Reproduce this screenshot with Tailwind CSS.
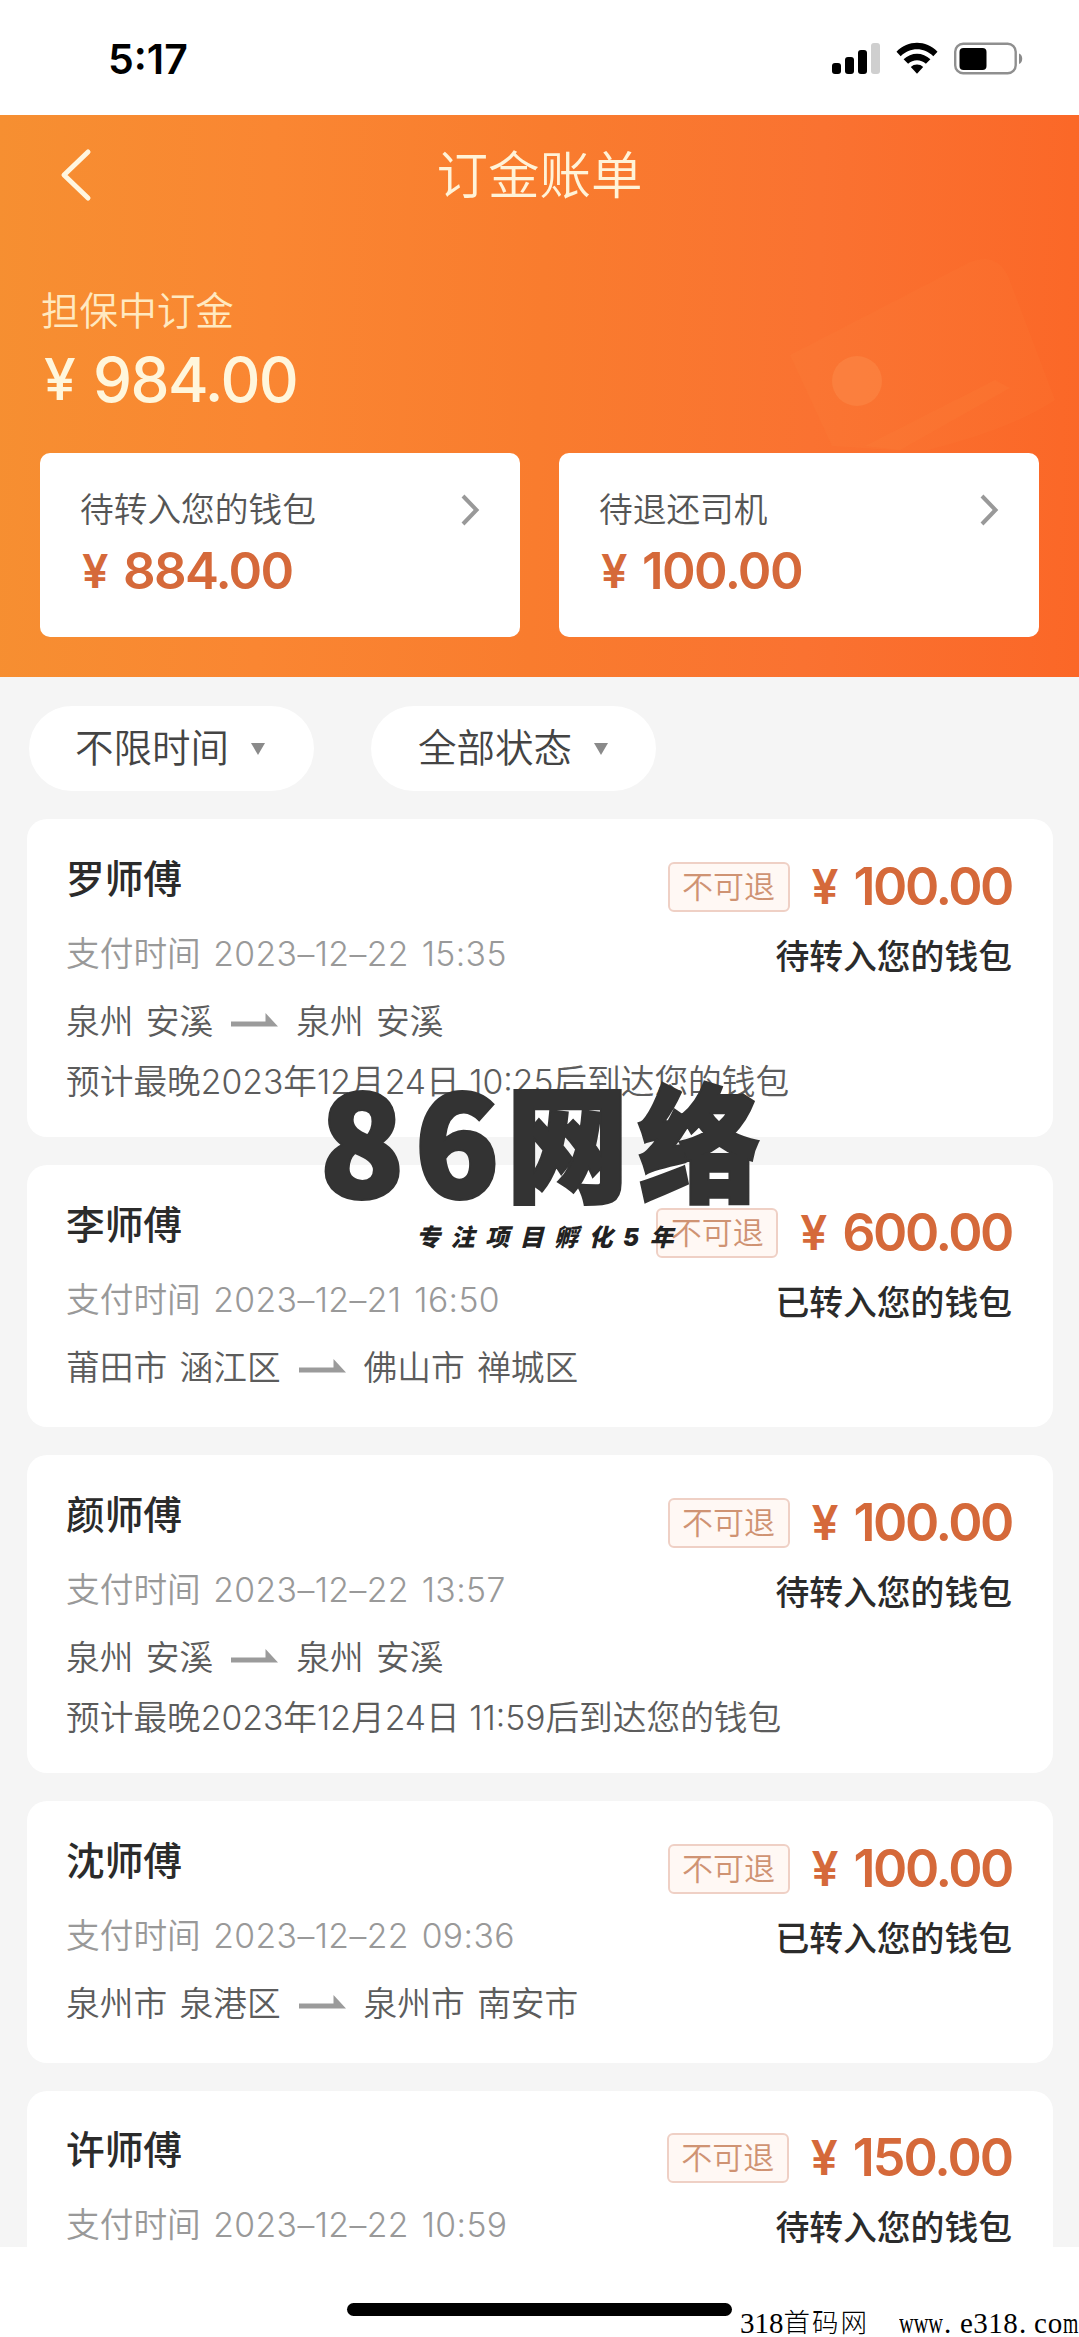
<!DOCTYPE html>
<html lang="zh-CN">
<head>
<meta charset="utf-8">
<title>订金账单</title>
<script src="https://cdn.jsdelivr.net/npm/@tailwindcss/browser@4"></script>
</head>
<body class="relative flex h-[2337px] w-[1079px] flex-col overflow-hidden bg-white font-['Inter','Noto_Sans_CJK_SC',sans-serif] whitespace-nowrap">

<svg class="hidden">
  <symbol id="arrow" viewBox="0 0 47 14"><path d="M0 8.5H34.5V0L47 13.5H0Z" fill="#9b9b9b"/></symbol>
  <symbol id="chevron" viewBox="0 0 20 34"><path d="M3 3L16.500 17L3 31" fill="none" stroke="#999" stroke-width="4"/></symbol>
</svg>

<!-- Status bar -->
<div class="flex h-[115px] shrink-0 items-start justify-between pr-[56px] pl-[108px]">
  <span class="mt-[39px] text-[41px] leading-10 font-semibold text-black">5:17</span>
  <div class="mt-[42px] flex items-start">
    <svg class="h-[33px] w-[50px]" viewBox="0 0 50 33">
      <rect x="0" y="21" width="9" height="11" rx="3"/>
      <rect x="13" y="15" width="9" height="17" rx="3"/>
      <rect x="26" y="8" width="9" height="24" rx="3"/>
      <rect x="39" y="1" width="9" height="31" rx="3" fill="#cfcfcf"/>
    </svg>
    <svg class="ml-[14px] h-[33px] w-[42px]" viewBox="0 0 42 33">
      <path d="M0.500 9.700C12-2.200 30-2.200 41.500 9.700L37.300 14.200C28 5 14 5 4.700 14.200Z"/>
      <path d="M7.600 17.300C15 9.800 27 9.800 34.400 17.300L29.900 21.800C25 17 17 17 12.100 21.800Z"/>
      <path d="M14.800 25C18 21.700 24 21.700 27.200 25L21 31.700Z"/>
    </svg>
    <svg class="ml-[16px] h-[33px] w-[69px]" viewBox="0 0 69 33">
      <rect x="1.200" y="1.700" width="60.500" height="29.500" rx="8" fill="none" stroke="#8f8f8f" stroke-width="2.400"/>
      <rect x="5.500" y="6" width="27" height="22" rx="4"/>
      <path d="M65 11.500C69.300 13 69.300 20.500 65 22Z" fill="#8a8a8a"/>
    </svg>
  </div>
</div>

<!-- Orange header -->
<header class="relative flex h-[562px] shrink-0 flex-col bg-linear-[92deg,#f68f31_0%,#fa8632_25%,#f97c2e_50%,#fa7231_75%,#fb6727_100%] px-10">
  <svg class="absolute top-[125px] left-[770px] h-[210px] w-[300px]" viewBox="0 0 300 210">
    <path d="M20 115L200 22Q226 12 238 36L285 160Q240 190 150 212L62 206Z" fill="#ffb36b" fill-opacity=".05"/>
    <path d="M95 206L225 140L240 148L130 210Z" fill="#ffa050" fill-opacity=".09"/>
    <circle cx="87" cy="141" r="25" fill="#ffb070" fill-opacity=".2"/>
  </svg>
  <div class="relative mt-[33px] flex h-[54px] items-center justify-center">
    <svg class="absolute top-0 left-[18px] h-[54px] w-[34px]" viewBox="0 0 34 54"><path d="M30 4L6 27L30 50" fill="none" stroke="#fff6e0" stroke-width="5" stroke-linecap="round" stroke-linejoin="round"/></svg>
    <h1 class="text-[51.500px] leading-[54px] font-[350] text-[#fff3d8]">订金账单</h1>
  </div>
  <p class="mt-[89px] pl-[1px] text-[38.600px] leading-10 font-[350] text-[#ffe9c0]">担保中订金</p>
  <div class="mt-[18px] flex items-center pl-[4px] leading-[62px] font-medium text-[#fff6dc]">
    <span class="w-[49px] text-[57px]">¥</span><span class="text-[62px] tracking-[-1.600px]">984.00</span>
  </div>
  <div class="mt-[42px] grid h-[184px] grid-cols-2 gap-[39px]">
    <section class="rounded-[10px] bg-white px-10 pt-[37px]">
      <div class="flex h-10 items-center justify-between"><span class="text-[33.700px] font-[350] text-[#555]">待转入您的钱包</span><svg class="h-[34px] w-5"><use href="#chevron"/></svg></div>
      <div class="mt-[15px] flex h-[52px] items-center pl-[2px] font-semibold text-[#d5693a]"><span class="w-[41px] text-[47px]">¥</span><span class="text-[51px] tracking-[-1.700px]">884.00</span></div>
    </section>
    <section class="rounded-[10px] bg-white px-10 pt-[37px]">
      <div class="flex h-10 items-center justify-between"><span class="text-[33.700px] font-[350] text-[#555]">待退还司机</span><svg class="h-[34px] w-5"><use href="#chevron"/></svg></div>
      <div class="mt-[15px] flex h-[52px] items-center pl-[2px] font-semibold text-[#d5693a]"><span class="w-[41px] text-[47px]">¥</span><span class="text-[51px] tracking-[-1.600px]">100.00</span></div>
    </section>
  </div>
</header>

<main class="flex h-[1570px] shrink-0 flex-col overflow-hidden bg-[#f5f5f5] pr-[26px] pl-[27px]">
  <!-- Filters -->
  <nav class="mt-[29px] flex h-[85px] shrink-0 gap-[57px] pl-[2px] text-[38.500px] text-[#444]">
    <button class="flex w-[285px] items-center rounded-full bg-white pl-[46px] font-[350]">不限时间<svg class="ml-[22px] h-3 w-[14px]" viewBox="0 0 14 12"><path d="M0 0H14L7 12Z" fill="#8a8a8a"/></svg></button>
    <button class="flex w-[285px] items-center rounded-full bg-white pl-[47px] font-[350]">全部状态<svg class="ml-[22px] h-3 w-[14px]" viewBox="0 0 14 12"><path d="M0 0H14L7 12Z" fill="#8a8a8a"/></svg></button>
  </nav>

  <!-- Bills -->
  <div class="mt-7 flex flex-col gap-7">
    <article class="flex h-[318px] justify-between rounded-[20px] bg-white pr-[41px] pl-[39px]">
      <div class="pt-[40px] text-[33.700px] leading-10 font-[350] text-[#5c5c5c]">
        <h2 class="text-[38.700px] leading-10 font-medium text-[#2b2b2b]">罗师傅</h2>
        <p class="mt-[35px] text-[#999] [word-spacing:3px]">支付时间 <span class="tracking-[0.400px]">2023–12–22 15:35</span></p>
        <p class="mt-7 flex items-center [word-spacing:3px]">泉州 安溪<svg class="mx-[18px] mb-1 h-[14px] w-[47px]"><use href="#arrow"/></svg>泉州 安溪</p>
        <p class="mt-5 w-0">预计最晚2023年12月24日 10:25后到达您的钱包</p>
      </div>
      <div class="flex flex-col items-end pt-[43px]">
        <div class="flex h-[50px] items-center text-[#d5693a]"><span class="flex h-[50px] w-[122px] items-center justify-center rounded-md border-2 border-[#efd0c5] bg-[#fff8f4] text-[31px] font-[350] text-[#cf9373]">不可退</span><span class="ml-[22px] w-[42px] text-[48px] font-semibold">¥</span><span class="text-[52px] font-semibold tracking-[-2.400px]">100.00</span></div>
        <p class="mt-[25px] text-[33.800px] leading-10 font-medium text-[#2b2b2b]">待转入您的钱包</p>
      </div>
    </article>

    <article class="flex h-[262px] justify-between rounded-[20px] bg-white pr-[41px] pl-[39px]">
      <div class="pt-[40px] text-[33.700px] leading-10 font-[350] text-[#5c5c5c]">
        <h2 class="text-[38.700px] leading-10 font-medium text-[#2b2b2b]">李师傅</h2>
        <p class="mt-[35px] text-[#999] [word-spacing:3px]">支付时间 <span class="tracking-[0.400px]">2023–12–21 16:50</span></p>
        <p class="mt-7 flex items-center [word-spacing:3px]">莆田市 涵江区<svg class="mx-[18px] mb-1 h-[14px] w-[47px]"><use href="#arrow"/></svg>佛山市 禅城区</p>
      </div>
      <div class="flex flex-col items-end pt-[43px]">
        <div class="flex h-[50px] items-center text-[#d5693a]"><span class="flex h-[50px] w-[122px] items-center justify-center rounded-md border-2 border-[#efd0c5] bg-[#fff8f4] text-[31px] font-[350] text-[#cf9373]">不可退</span><span class="ml-[22px] w-[42px] text-[48px] font-semibold">¥</span><span class="text-[52px] font-semibold tracking-[-2.400px]">600.00</span></div>
        <p class="mt-[25px] text-[33.800px] leading-10 font-medium text-[#2b2b2b]">已转入您的钱包</p>
      </div>
    </article>

    <article class="flex h-[318px] justify-between rounded-[20px] bg-white pr-[41px] pl-[39px]">
      <div class="pt-[40px] text-[33.700px] leading-10 font-[350] text-[#5c5c5c]">
        <h2 class="text-[38.700px] leading-10 font-medium text-[#2b2b2b]">颜师傅</h2>
        <p class="mt-[35px] text-[#999] [word-spacing:3px]">支付时间 <span class="tracking-[0.400px]">2023–12–22 13:57</span></p>
        <p class="mt-7 flex items-center [word-spacing:3px]">泉州 安溪<svg class="mx-[18px] mb-1 h-[14px] w-[47px]"><use href="#arrow"/></svg>泉州 安溪</p>
        <p class="mt-5 w-0">预计最晚2023年12月24日 11:59后到达您的钱包</p>
      </div>
      <div class="flex flex-col items-end pt-[43px]">
        <div class="flex h-[50px] items-center text-[#d5693a]"><span class="flex h-[50px] w-[122px] items-center justify-center rounded-md border-2 border-[#efd0c5] bg-[#fff8f4] text-[31px] font-[350] text-[#cf9373]">不可退</span><span class="ml-[22px] w-[42px] text-[48px] font-semibold">¥</span><span class="text-[52px] font-semibold tracking-[-2.400px]">100.00</span></div>
        <p class="mt-[25px] text-[33.800px] leading-10 font-medium text-[#2b2b2b]">待转入您的钱包</p>
      </div>
    </article>

    <article class="flex h-[262px] justify-between rounded-[20px] bg-white pr-[41px] pl-[39px]">
      <div class="pt-[40px] text-[33.700px] leading-10 font-[350] text-[#5c5c5c]">
        <h2 class="text-[38.700px] leading-10 font-medium text-[#2b2b2b]">沈师傅</h2>
        <p class="mt-[35px] text-[#999] [word-spacing:3px]">支付时间 <span class="tracking-[0.400px]">2023–12–22 09:36</span></p>
        <p class="mt-7 flex items-center [word-spacing:3px]">泉州市 泉港区<svg class="mx-[18px] mb-1 h-[14px] w-[47px]"><use href="#arrow"/></svg>泉州市 南安市</p>
      </div>
      <div class="flex flex-col items-end pt-[43px]">
        <div class="flex h-[50px] items-center text-[#d5693a]"><span class="flex h-[50px] w-[122px] items-center justify-center rounded-md border-2 border-[#efd0c5] bg-[#fff8f4] text-[31px] font-[350] text-[#cf9373]">不可退</span><span class="ml-[22px] w-[42px] text-[48px] font-semibold">¥</span><span class="text-[52px] font-semibold tracking-[-2.400px]">100.00</span></div>
        <p class="mt-[25px] text-[33.800px] leading-10 font-medium text-[#2b2b2b]">已转入您的钱包</p>
      </div>
    </article>

    <article class="flex h-[262px] justify-between rounded-[20px] bg-white pr-[41px] pl-[39px]">
      <div class="pt-[39px] text-[33.700px] leading-10 font-[350] text-[#5c5c5c]">
        <h2 class="text-[38.700px] leading-10 font-medium text-[#2b2b2b]">许师傅</h2>
        <p class="mt-[35px] text-[#999] [word-spacing:3px]">支付时间 <span class="tracking-[0.400px]">2023–12–22 10:59</span></p>
      </div>
      <div class="flex flex-col items-end pt-[42px]">
        <div class="flex h-[50px] items-center text-[#d5693a]"><span class="flex h-[50px] w-[122px] items-center justify-center rounded-md border-2 border-[#efd0c5] bg-[#fff8f4] text-[31px] font-[350] text-[#cf9373]">不可退</span><span class="ml-[22px] w-[42px] text-[48px] font-semibold">¥</span><span class="text-[52px] font-semibold tracking-[-2px]">150.00</span></div>
        <p class="mt-[25px] text-[33.800px] leading-10 font-medium text-[#2b2b2b]">待转入您的钱包</p>
      </div>
    </article>
  </div>
</main>

<!-- Home indicator -->
<footer class="flex h-[90px] shrink-0 justify-center bg-white pt-[56px]">
  <div class="h-[13px] w-[385px] rounded-full bg-black"></div>
</footer>

<!-- Watermarks -->
<div class="absolute top-[1073px] left-[320px] flex h-[130px] items-center font-['Noto_Sans_CJK_SC',sans-serif] leading-[130px] font-black text-[#333] [-webkit-text-stroke:4px_#333] [paint-order:stroke]">
  <span class="-mt-[2px] w-[187px] text-[138px] tracking-[11px]">86</span><span class="origin-center scale-y-[1.03] text-[121px] tracking-[11px]">网络</span>
</div>
<p class="absolute top-[1223px] left-[416px] text-[24px] leading-[30px] font-black tracking-[10.500px] text-[#222] italic">专注项目孵化5年</p>
<div class="absolute top-[2307px] left-[740px] flex items-center font-['Liberation_Serif','Noto_Sans_CJK_SC',serif] text-[29px] leading-[32px] text-black">
  <span>318</span><span class="text-[26.500px] font-light tracking-[2px]">首码网</span>
  <span class="ml-[30px] w-[45px] origin-left scale-x-[0.7]">www</span><span class="w-[16px]">.</span><span class="w-[59px] tracking-[0.500px]">e318</span><span class="w-[15px]">.</span><span class="w-[29px] tracking-[0.800px]">co</span><span class="w-[15px] origin-left scale-x-[0.68]">m</span>
</div>
</body>
</html>
